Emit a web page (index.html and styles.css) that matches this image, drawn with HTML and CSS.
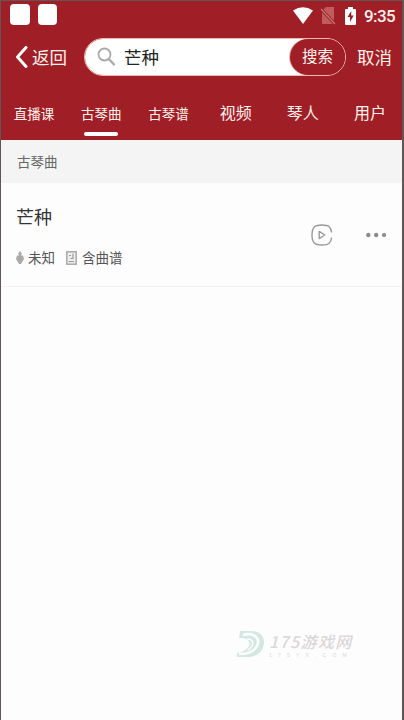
FILE: index.html
```html
<!DOCTYPE html>
<html lang="zh-CN">
<head>
<meta charset="utf-8">
<title>芒种</title>
<link rel="stylesheet" href="styles.css">
</head>
<body>
<div class="app">
  <header class="head">
    <div class="status">
      <div class="notes"><i></i><i></i></div>
      <div class="system">
        <svg class="wifi" width="20" height="17" viewBox="0 0 20 17"><path d="M0 3.5Q10-3 20 3.5L10 17Z" fill="#fff"/></svg>
        <svg class="sim" width="16" height="18" viewBox="0 0 16 18"><path d="M6 0H14V17H2V4Z" fill="#c05b5e"/><path d="M0 1 15 17" stroke="#a01e25" stroke-width="3"/><path d="M1 2 15 17" stroke="#c87774" stroke-width="1.2"/></svg>
        <svg class="battery" width="11" height="18" viewBox="0 0 11 18"><path d="M3 0H8V2H10Q11 2 11 3V17Q11 18 10 18H1Q0 18 0 17V3Q0 2 1 2H3Z" fill="#fff"/><path d="M6.3 4 2.5 10H5V15L8.7 8.5H6.2Z" fill="#a01e25"/></svg>
        <span class="clock">9:35</span>
      </div>
    </div>
    <div class="searchbar">
      <div class="back"><svg width="13" height="22" viewBox="0 0 13 22"><path d="M11 1.5 2.5 11 11 20.5" fill="none" stroke="#fff" stroke-width="3" stroke-linecap="round" stroke-linejoin="round"/></svg><span>返回</span></div>
      <div class="field">
        <svg width="19" height="20" viewBox="0 0 19 20"><circle cx="7.5" cy="7.5" r="6" fill="none" stroke="#aaa" stroke-width="1.8"/><path d="M12 12.2 17 17.5" stroke="#aaa" stroke-width="2.4" stroke-linecap="round"/></svg>
        <span class="query">芒种</span>
        <span class="submit">搜索</span>
      </div>
      <span class="cancel">取消</span>
    </div>
    <nav class="tabs">
      <span class="small">直播课</span><span class="small active">古琴曲</span><span class="small">古琴谱</span><span>视频</span><span>琴人</span><span>用户</span>
    </nav>
  </header>
  <h2 class="section">古琴曲</h2>
  <article class="song">
    <div class="info">
      <h3>芒种</h3>
      <div class="meta">
        <svg class="artist" width="8" height="14" viewBox="0 0 8 14"><path d="M4 0 5.8 2.5 5 4.5H7L8 8 5 13H3L0 8 1 4.5H3L2.2 2.5Z" fill="#aaa"/></svg>
        <span class="name">未知</span>
        <svg class="score" width="11" height="14" viewBox="0 0 11 14"><rect x=".8" y=".8" width="9.4" height="12.4" fill="#eee" stroke="#aaa" stroke-width="1.5"/><path d="M7 2.5V7.5H4.5M3 4.5H5M2.5 10.5H8" fill="none" stroke="#999" stroke-width="1.1"/></svg>
        <span>含曲谱</span>
      </div>
    </div>
    <svg class="play" width="22" height="22" viewBox="0 0 22 22" fill="none" stroke="#999" stroke-width="1.4"><path d="M20.6 8.5C20 3 18 1 11 1S1 3 1 11 4 21 11 21 20 19 20.6 13.5"/><path d="M8.2 7.4V14.6L13.8 11Z" stroke-linejoin="round"/></svg>
    <svg class="more" width="20" height="6" viewBox="0 0 20 6" fill="#8b8b8b"><circle cx="2.3" cy="3" r="2.2"/><circle cx="10.2" cy="3" r="2.2"/><circle cx="18" cy="3" r="2.1"/></svg>
  </article>
  <div class="watermark">
    <svg width="28" height="28" viewBox="0 0 28 28"><path d="M3 1H14C23 1 27 6 27 12 27 22 19 27 11 27H0V23C8 22 14 17 12 12 10 8 6 8 2 8Z" fill="#d3e8e2"/><path d="M6 5C17 2 24 8 20 16 17 22 9 24 2 24" fill="none" stroke="#fdfdfd" stroke-width="2.6"/><path d="M10 9C17 9 18 15 11 20" fill="none" stroke="#fdfdfd" stroke-width="1.5"/></svg>
    <div class="brand"><div class="title">175游戏网</div><div class="domain">175YX.COM</div></div>
  </div>
</div>
</body>
</html>
```

FILE: styles.css
```css
* { box-sizing: border-box; }
body { margin: 0; font-family: Roboto, "Noto Sans CJK SC", sans-serif; background: #fdfdfd; }
.app { height: 720px; border: solid #625457; border-width: 1px 2px 0 1px; overflow: hidden; background: #fdfdfd; position: relative; }
.head { height: 139px; background: #a01e25; color: #fff1ec; }
.status { height: 32px; padding: 3px 7px 0 9px; display: flex; justify-content: space-between; }
.notes { display: flex; gap: 8px; }
.notes i { width: 20px; height: 21px; background: #fff; border-radius: 4px; }
.notes i + i { width: 19px; }
.system { display: flex; align-items: center; height: 23px; }
.sim { margin-left: 7px; }
.battery { margin-left: 9px; }
.clock { margin-left: 8px; width: 31px; font-size: 17px; font-weight: 500; letter-spacing: -.6px; white-space: nowrap; }
.searchbar { height: 50px; padding: 5px 9px 7px 14px; display: flex; align-items: center; }
.back { display: flex; align-items: center; gap: 4px; width: 69px; font-size: 17.5px; white-space: nowrap; }
.back span, .query, .cancel { padding-bottom: 2px; }
.field { width: 262px; height: 38px; border: 1px solid #f5b5af; border-radius: 19px; background: linear-gradient(90deg, #fff 0 225px, #a01e25 225px) padding-box; padding-left: 12px; display: flex; align-items: center; }
.query { margin-left: 8px; font-size: 17.5px; color: #222; }
.submit { margin-left: auto; width: 55px; height: 36px; border-radius: 18px; background: #a01e25; font-size: 15.5px; line-height: 37px; text-align: center; box-shadow: -1px 0 0 #efb2ac; }
.cancel { margin-left: 11px; font-size: 17.5px; white-space: nowrap; }
.tabs { height: 57px; display: grid; grid-template-columns: repeat(6, 67.2px); justify-content: start; margin-left: -1px; }
.tabs span { display: flex; justify-content: center; padding: 19px 0 0 1px; font-size: 16px; line-height: 24px; position: relative; }
.tabs .small { font-size: 13.5px; }
.tabs .active::after { content: ""; position: absolute; top: 49px; width: 34px; height: 4px; border-radius: 2px; background: #fff; }
.section { margin: 0; height: 43px; background: #f5f4f4; padding-left: 16px; font-size: 13.5px; line-height: 45px; font-weight: 400; color: #666; }
.song { height: 104px; border-bottom: 1px solid #f3f1f2; padding: 0 16px 0 15px; display: flex; align-items: center; }
.info { flex: 1; align-self: stretch; }
.song h3 { margin: 21px 0 0; font-size: 18px; line-height: 28px; font-weight: 400; color: #333; }
.meta { margin-top: 16px; display: flex; align-items: center; font-size: 13.5px; line-height: 20px; color: #555; }
.name { margin: 0 11px 0 4px; }
.score { margin-right: 5px; }
.more { margin-left: 33px; }
.watermark { position: absolute; left: 236px; top: 629px; display: flex; gap: 4px; color: #dad7d9; }
.title { font: italic 500 16px/22px "Noto Sans CJK SC", sans-serif; letter-spacing: 1.4px; white-space: nowrap; }
.domain { font: 5px/6px "Liberation Sans", sans-serif; letter-spacing: 6.2px; white-space: nowrap; }
```
